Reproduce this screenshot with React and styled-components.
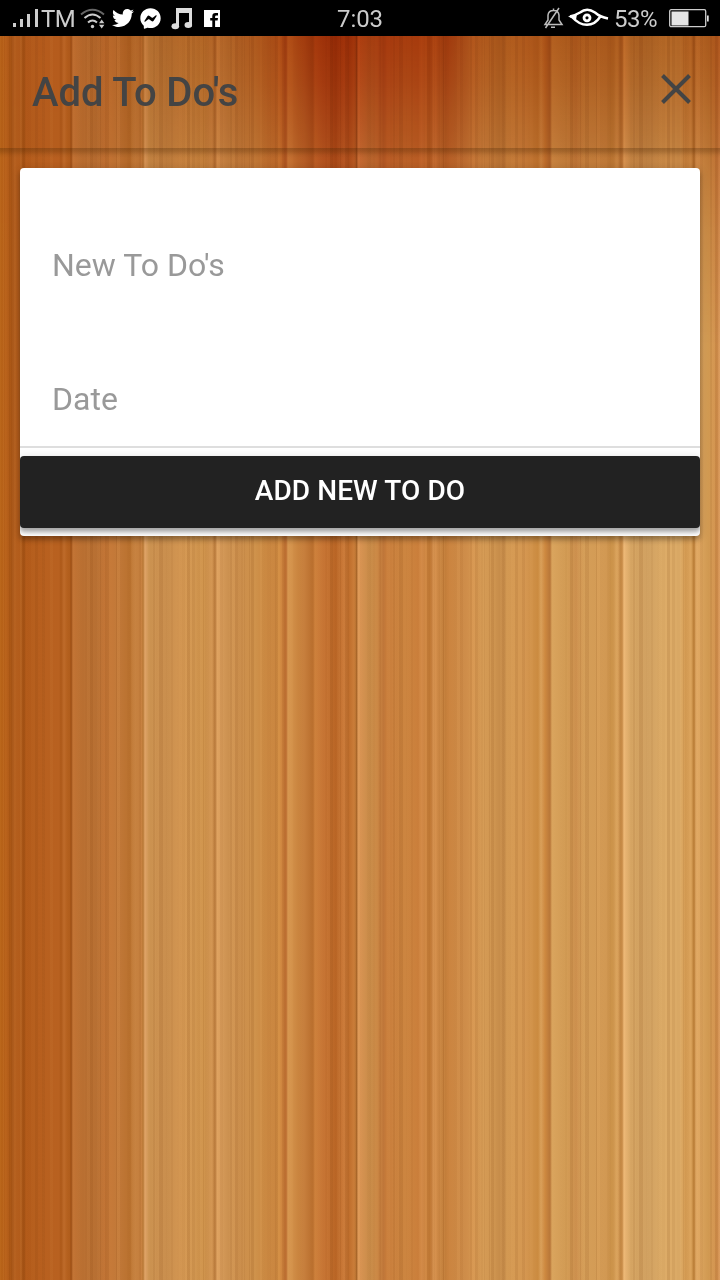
import React from "react";
import styled, { createGlobalStyle } from "styled-components";
import { FaTwitter, FaFacebookMessenger } from "react-icons/fa";

/* Broad colours of the boards: x position and colour. */
const boards = [
  [0, "#b96418"], [6, "#b9611a"], [11, "#a85413"], [13, "#b5601f"], [20, "#b25c1b"],
  [24, "#a05013"], [26, "#b35b1a"], [45, "#b8601f"], [59, "#b86120"], [61, "#ad5919"],
  [64, "#be6b2a"], [67, "#b5611f"], [70, "#b05d1c"], [71, "#9a4d14"], [73, "#c27334"], [83, "#b96f31"],
  [97, "#b87033"], [105, "#c27435"], [110, "#c67a39"], [120, "#c07737"], [130, "#b9712e"],
  [134, "#c78240"], [142, "#c27c3b"], [143, "#b0702e"], [145, "#e0a468"], [149, "#cb9250"],
  [160, "#cc9150"], [167, "#c98e4d"], [178, "#d29551"], [195, "#d19650"], [204, "#cc9049"],
  [212, "#d39653"], [215, "#b8793a"], [217, "#dca05f"], [228, "#cc9150"], [240, "#ca8d4b"],
  [256, "#ce914a"], [265, "#cb8942"], [275, "#c9853f"], [279, "#d59146"], [283, "#cc803c"],
  [286, "#ba6b2f"], [288, "#d79750"], [298, "#ca853f"], [304, "#c77f3d"], [313, "#b96e2d"],
  [315, "#ce813c"], [323, "#c77534"], [336, "#b96525"], [344, "#cb7b3a"], [349, "#bf6e2c"],
  [354, "#ca7d39"], [356, "#b87230"], [357, "#a6652a"], [358, "#dc9655"], [370, "#c88b48"], [377, "#cb8845"],
  [384, "#b96e32"], [386, "#c97e3c"], [405, "#cc8540"], [418, "#cb7f3b"], [422, "#d38b48"],
  [430, "#c67e38"], [431, "#b8702f"], [433, "#dd9854"], [443, "#be7a37"], [448, "#cb843f"], [463, "#cd8b48"],
  [473, "#d3934e"], [483, "#d49a54"], [493, "#cf9550"], [504, "#c18746"], [507, "#d59b54"],
  [525, "#d59751"], [538, "#cb8b40"], [541, "#daa05a"], [545, "#ce8940"], [550, "#b97739"],
  [552, "#daa45d"], [567, "#d19a53"], [576, "#cd904e"], [584, "#d59e58"], [606, "#d29953"],
  [612, "#ca9148"], [617, "#dba45e"], [622, "#bf823f"], [624, "#edb877"], [631, "#d5a462"],
  [648, "#d1a161"], [662, "#dbaa66"], [680, "#dbaa66"], [685, "#d39a52"], [691, "#dca45c"],
  [694, "#b87b34"], [696, "#e0a864"], [708, "#d19a52"], [717, "#ce8c4a"], [720, "#dd9d60"],
];

/* Thin grain lines, one to four pixels wide. */
const makeGrain = () => {
  const lines = [];
  let seed = 37;
  let x = 0;
  while (x < 240) {
    seed = (seed * 73 + 41) % 1009;
    const width = 1 + (seed % 4);
    const alpha = Math.pow((seed % 23) / 23, 2) * 0.13;
    const tone = lines.length % 2 ? `rgba(120,60,10,${alpha.toFixed(3)})` : `rgba(255,195,120,${alpha.toFixed(3)})`;
    lines.push(`${tone} ${x}px ${Math.min(240, x + width)}px`);
    x += width;
  }
  return `repeating-linear-gradient(90deg, ${lines.join(",")})`;
};

const wood = `${makeGrain()}, linear-gradient(90deg, ${boards.map(([x, c]) => `${c} ${x}px`).join(",")})`;

const GlobalStyle = createGlobalStyle`
  * { box-sizing: border-box; }
  body { margin: 0; font-family: Roboto, "Liberation Sans", sans-serif; }
`;

const Screen = styled.div`
  position: relative;
  isolation: isolate;
  display: flex;
  flex-direction: column;
  min-height: 1280px;
  background: ${wood};

  &::before {
    content: "";
    position: absolute;
    inset: 36px 0 auto;
    height: 310px;
    z-index: -1;
    mix-blend-mode: multiply;
    background: linear-gradient(90deg,
      #fffaff 0, #fff5f0 70px, #f0d8b8 120px, #dfb98a 170px, #dcac78 230px,
      #da9c66 260px, #d68448 290px, #ce6c30 320px, #cb6428 345px, #d4733c 375px, #d47838 430px,
      #cc7238 448px, #d59058 470px, #d79a5c 500px, #d59659 550px, #d09558 620px, #d29b60 670px, #d3965c 720px);
    mask-image: linear-gradient(#000, rgba(0,0,0,.85) 15%, rgba(0,0,0,.54) 38%, rgba(0,0,0,.26) 64%, transparent);
  }
`;

const StatusBar = styled.div`
  display: flex;
  justify-content: space-between;
  height: 36px;
  background: #000;
  color: #ccc;
  font-size: 24px;
  line-height: 38px;
`;

const StatusGroup = styled.div`
  display: flex;
  align-items: center;
  flex: 1;
  justify-content: ${({ $end }) => ($end ? "flex-end" : "flex-start")};
  padding: ${({ $end }) => ($end ? "0 10px 0 0" : "0 0 0 12px")};

  svg { display: block; flex: none; }
`;

const Carrier = styled.span`
  width: 38px;
  margin-left: 2px;
  padding-top: 1px;
  letter-spacing: -0.6px;
`;

const Percent = styled.span`
  width: 45px;
  margin: 0 10px 0 5px;
  padding-top: 1px;
  letter-spacing: -0.5px;
`;

const Clock = styled.div`
  margin-right: 2px;
  letter-spacing: -0.1px;
`;

const Gap = styled.span`
  flex: none;
  width: ${({ $w }) => $w}px;
`;

const Header = styled.header`
  display: flex;
  align-items: center;
  justify-content: space-between;
  height: 112px;
  padding: 0 28px 0 32px;
  background: rgba(120, 60, 0, 0.035);
`;

const HeaderShadow = styled.div`
  height: 10px;
  margin-bottom: -10px;
  background: linear-gradient(rgba(70, 35, 0, .3), rgba(70, 35, 0, .24) 30%, rgba(70, 35, 0, .06) 70%, transparent);
`;

const Title = styled.h1`
  margin: 2px 0 0;
  color: #444;
  font-size: 40px;
  font-weight: 500;
  line-height: 48px;
  letter-spacing: -0.08px;
`;

const CloseButton = styled.button`
  display: flex;
  margin: 0 0 6px;
  padding: 0;
  border: 0;
  background: none;
`;

const Card = styled.main`
  display: flex;
  flex-direction: column;
  height: 368px;
  margin: 20px 20px 0;
  padding-bottom: 8px;
  overflow: hidden;
  border-radius: 4px;
  background: #fff;
  box-shadow: 0 4px 4px rgba(0, 0, 0, .2), 0 2px 8px rgba(0, 0, 0, .2);
`;

const Field = styled.label`
  display: flex;
  align-items: flex-end;
  height: ${({ $height }) => $height}px;
  padding: 0 32px 28px;
  border-bottom: ${({ $line }) => ($line ? "2px solid #dedede" : "0")};
  color: #999;
  font-size: 32px;
  line-height: 38px;
`;

const AddButton = styled.button`
  height: 72px;
  margin: 8px 0 0;
  padding: 0 0 3px;
  border: 0;
  border-radius: 4px;
  background: #222;
  box-shadow: 0 4px 4px rgba(0, 0, 0, .28), 0 2px 10px rgba(0, 0, 0, .15);
  color: #fff;
  font: 500 28px/36px Roboto, "Liberation Sans", sans-serif;
  letter-spacing: 0.1px;
`;

const SignalIcon = () => (
  <svg width="27" height="20" fill="#ccc">
    <path d="M1 15h3v4H1zM8 11h3v8H8zM15 6h3v13h-3zM23 1h3v18h-3z" />
  </svg>
);

const WifiIcon = () => (
  <svg width="26" height="21" fill="none" stroke="#ccc" strokeWidth="2">
    <path d="M1 6.5Q12.5-3 24 6.5" stroke="#666" />
    <path d="M4.5 10Q12.5 3 20.5 10M8 14.5Q12.5 10.5 17 14.5" />
    <circle cx="12.5" cy="18.5" r="1.7" fill="#ccc" stroke="none" />
    <path d="M19 15.2h5.4l-2.7-3.7zM19 16.8h5.4l-2.7 3.7z" fill="#ccc" stroke="none" />
  </svg>
);

const MusicIcon = () => (
  <svg width="22" height="23" fill="#ddd">
    <path d="M5 1H21v18.5H18V6H8v14H5z" />
    <ellipse cx="4.3" cy="19.3" rx="3.8" ry="3" />
    <ellipse cx="17.3" cy="18" rx="3.8" ry="3" />
  </svg>
);

const FacebookIcon = () => (
  <svg width="16" height="17">
    <path fill="#fff" d="M0 0h16v17H0z" />
    <path d="M8.3 17v-6.5H6.2V8h2.1V6.3Q8.3 3 11.5 3H14v2.5h-1.7q-1.2 0-1.2 1.2V8H14l-.4 2.5h-2.5V17z" />
  </svg>
);

const MutedIcon = () => (
  <svg width="21" height="22" fill="none" stroke="#bbb" strokeWidth="1.5">
    <path d="M2 17.5h17L16 13V8Q15.5 3.5 10.5 3.5T5 8v5zM10.5 3.5V1.5M8 20.2h4M2.5 21 16 1" />
  </svg>
);

const EyeIcon = () => (
  <svg width="41" height="20" fill="none" stroke="#fff" strokeWidth="2.4">
    <path d="M2 8.5Q8 7 12 4.5Q19-1.2 27 4.5Q32 9 40 10.5M4 9Q11 16.8 19 16.8Q27 16.8 32 9" />
    <path d="M0 8.5 9 6 8 12z" fill="#fff" stroke="none" />
    <circle cx="19" cy="9.8" r="3" strokeWidth="2.8" />
  </svg>
);

const BatteryIcon = () => (
  <svg width="41" height="19" fill="none">
    <rect x="0.7" y="0.7" width="36" height="17" rx="1.5" stroke="#ccc" strokeWidth="1.3" />
    <path d="M2.5 2.5h17v14h-17zM38 6.5h1.7v6H38z" fill="#e4e4e4" />
  </svg>
);

export default function App() {
  return (
    <Screen>
      <GlobalStyle />
      <StatusBar>
        <StatusGroup>
          <SignalIcon />
          <Carrier>TM</Carrier>
          <Gap $w={1} />
          <WifiIcon />
          <Gap $w={6} />
          <FaTwitter size={22} color="#fff" />
          <Gap $w={6} />
          <FaFacebookMessenger size={21} color="#fff" />
          <Gap $w={10} />
          <MusicIcon />
          <Gap $w={11} />
          <FacebookIcon />
        </StatusGroup>
        <Clock>7:03</Clock>
        <StatusGroup $end>
          <MutedIcon />
          <Gap $w={4} />
          <EyeIcon />
          <Percent>53%</Percent>
          <BatteryIcon />
        </StatusGroup>
      </StatusBar>
      <Header>
        <Title>Add To Do's</Title>
        <CloseButton aria-label="Close">
          <svg width="32" height="32" stroke="#444" strokeWidth="4">
            <path d="M2.5 2.5 29.5 29.5M29.5 2.5 2.5 29.5" />
          </svg>
        </CloseButton>
      </Header>
      <HeaderShadow />
      <Card>
        <Field $height={144}>New To Do's</Field>
        <Field $height={136} $line>Date</Field>
        <AddButton>ADD NEW TO DO</AddButton>
      </Card>
    </Screen>
  );
}
